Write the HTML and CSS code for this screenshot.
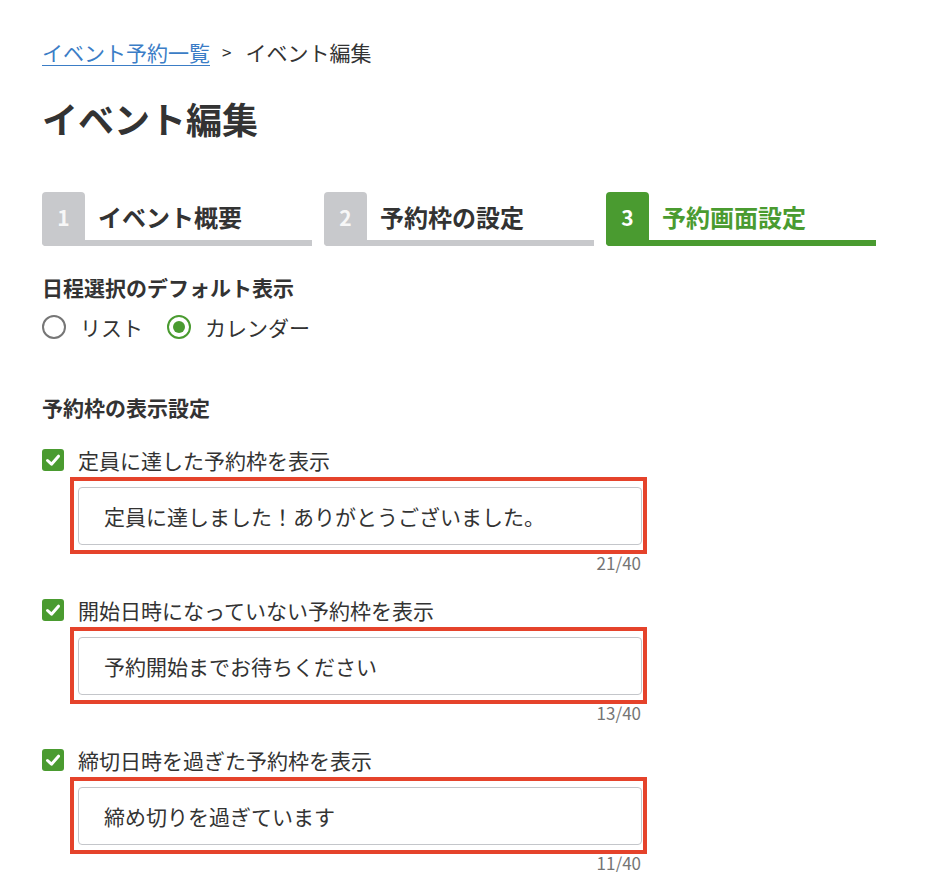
FILE: index.html
```html
<!DOCTYPE html>
<html lang="ja">
<head>
<meta charset="utf-8">
<title>イベント編集</title>
<link rel="stylesheet" href="styles.css">
</head>
<body>
<main class="page">
  <nav class="breadcrumb">
    <a href="#" class="crumb-link">イベント予約一覧</a>
    <span class="crumb-sep">&gt;</span>
    <span class="crumb-current">イベント編集</span>
  </nav>

  <h1 class="title">イベント編集</h1>

  <ol class="steps">
    <li class="step">
      <span class="step-num">1</span>
      <span class="step-label">イベント概要</span>
    </li>
    <li class="step">
      <span class="step-num">2</span>
      <span class="step-label">予約枠の設定</span>
    </li>
    <li class="step step-active">
      <span class="step-num">3</span>
      <span class="step-label">予約画面設定</span>
    </li>
  </ol>

  <section class="section">
    <h2 class="section-title">日程選択のデフォルト表示</h2>
    <div class="radios">
      <label class="radio"><span class="radio-circle"></span><span class="radio-text">リスト</span></label>
      <label class="radio radio-checked"><span class="radio-circle"></span><span class="radio-text">カレンダー</span></label>
    </div>
  </section>

  <section class="section section-slots">
    <h2 class="section-title">予約枠の表示設定</h2>

    <div class="option">
      <label class="check">
        <span class="check-box"><svg viewBox="0 0 22 22" width="22" height="22"><polyline points="5.5,11.5 9.5,15.2 16.5,7.2" fill="none" stroke="#fff" stroke-width="3" stroke-linecap="round" stroke-linejoin="round"/></svg></span>
        <span class="check-text">定員に達した予約枠を表示</span>
      </label>
      <div class="field">
        <div class="highlight"><div class="input">定員に達しました！ありがとうございました。</div></div>
        <div class="counter">21/40</div>
      </div>
    </div>

    <div class="option">
      <label class="check">
        <span class="check-box"><svg viewBox="0 0 22 22" width="22" height="22"><polyline points="5.5,11.5 9.5,15.2 16.5,7.2" fill="none" stroke="#fff" stroke-width="3" stroke-linecap="round" stroke-linejoin="round"/></svg></span>
        <span class="check-text">開始日時になっていない予約枠を表示</span>
      </label>
      <div class="field">
        <div class="highlight"><div class="input">予約開始までお待ちください</div></div>
        <div class="counter">13/40</div>
      </div>
    </div>

    <div class="option">
      <label class="check">
        <span class="check-box"><svg viewBox="0 0 22 22" width="22" height="22"><polyline points="5.5,11.5 9.5,15.2 16.5,7.2" fill="none" stroke="#fff" stroke-width="3" stroke-linecap="round" stroke-linejoin="round"/></svg></span>
        <span class="check-text">締切日時を過ぎた予約枠を表示</span>
      </label>
      <div class="field">
        <div class="highlight"><div class="input">締め切りを過ぎています</div></div>
        <div class="counter">11/40</div>
      </div>
    </div>
  </section>
</main>
</body>
</html>
```

FILE: styles.css
```css
* { box-sizing: border-box; }

html, body {
  margin: 0;
  padding: 0;
  background: #ffffff;
}

body {
  font-family: "Noto Sans CJK JP", "Noto Sans", sans-serif;
  color: #333333;
  font-size: 21px;
}

.page {
  padding: 37px 0 0 42px;
}

.breadcrumb {
  display: flex;
  align-items: center;
  height: 30px;
  line-height: 30px;
  font-size: 21px;
}

.crumb-link {
  color: #3b7dc6;
  text-decoration: underline;
  text-underline-offset: 4px;
  text-decoration-thickness: 1px;
}

.crumb-sep {
  margin: 0 14px 0 12px;
  font-size: 17px;
}

.title {
  margin: 26px 0 0;
  font-size: 36px;
  line-height: 50px;
  font-weight: 700;
  color: #333333;
}

.steps {
  list-style: none;
  margin: 49px 0 0;
  padding: 0;
  display: flex;
  gap: 12px;
}

.step {
  width: 270px;
  height: 54px;
  display: flex;
  border-bottom: 6px solid #c8c9cc;
  border-radius: 0 0 0 4px;
}

.step-num {
  width: 43px;
  height: 54px;
  margin-bottom: -6px;
  background: #c8c9cc;
  border-radius: 4px;
  color: #f7f7f7;
  font-size: 21px;
  font-weight: 700;
  display: flex;
  align-items: center;
  justify-content: center;
  padding-bottom: 4px;
}

.step-label {
  padding-left: 13px;
  display: flex;
  align-items: center;
  font-size: 24px;
  font-weight: 700;
  color: #333333;
}

.step-active {
  border-bottom-color: #4a9b30;
}

.step-active .step-num {
  background: #4a9b30;
  color: #ffffff;
}

.step-active .step-label {
  color: #4a9b30;
}

.section {
  margin-top: 26px;
}

.section-slots {
  margin-top: 50px;
}

.section-title {
  margin: 0;
  font-size: 21px;
  line-height: 30px;
  font-weight: 700;
  color: #333333;
}

.radios {
  margin-top: 10px;
  display: flex;
  align-items: center;
  gap: 24px;
  height: 30px;
}

.radio {
  display: flex;
  align-items: center;
  gap: 14px;
}

.radio-circle {
  width: 24px;
  height: 24px;
  border-radius: 50%;
  border: 2px solid #767676;
  display: flex;
  align-items: center;
  justify-content: center;
}

.radio-checked .radio-circle {
  border-color: #4a9b30;
}

.radio-checked .radio-circle::after {
  content: "";
  width: 12px;
  height: 12px;
  border-radius: 50%;
  background: #4a9b30;
}

.radio-text {
  font-size: 21px;
  line-height: 30px;
  color: #333333;
}

.option {
  margin-top: 23px;
}

.check {
  display: flex;
  align-items: center;
  gap: 14px;
  height: 30px;
}

.check-box {
  width: 22px;
  height: 22px;
  border-radius: 3px;
  background: #4a9b30;
  display: flex;
}

.check-text {
  font-size: 21px;
  line-height: 30px;
  color: #333333;
}

.field {
  margin: 2px 0 0 28px;
  width: 577px;
}

.highlight {
  border: 4px solid #e5432b;
  padding: 6px 1px 5px 4px;
}

.input {
  height: 58px;
  border: 1px solid #c4c6ca;
  border-radius: 4px;
  padding: 0 0 0 25px;
  display: flex;
  align-items: center;
  font-size: 21px;
  color: #333333;
}

.counter {
  text-align: right;
  padding-right: 6px;
  font-size: 17px;
  line-height: 18px;
  color: #757575;
}
```
